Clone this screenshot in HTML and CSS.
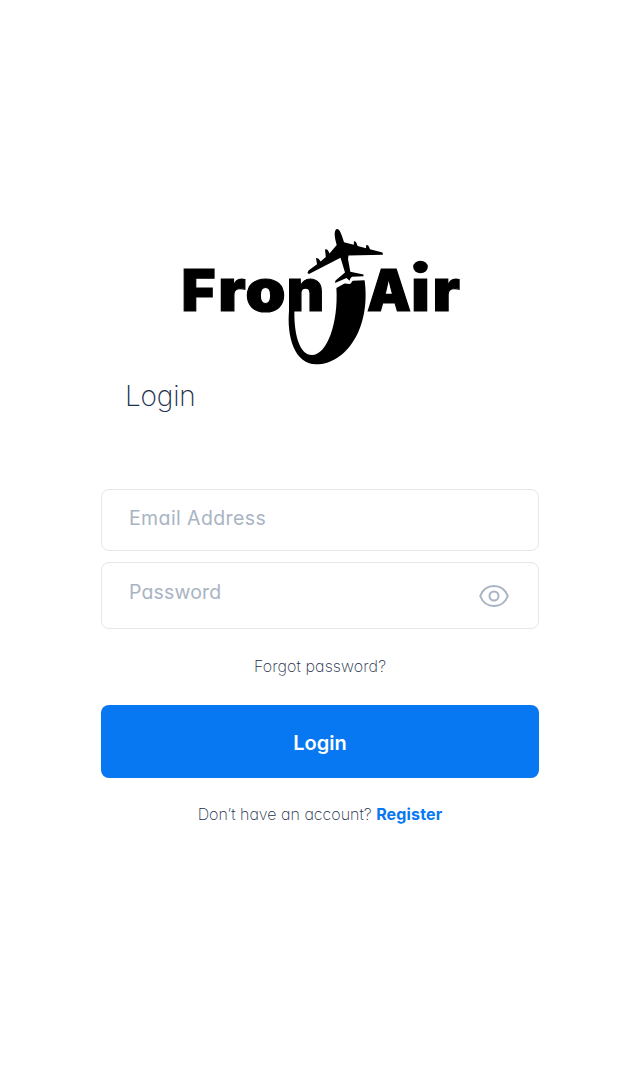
FILE: index.html
```html
<!DOCTYPE html>
<html lang="en">
<head>
<meta charset="utf-8">
<title>FronAir Login</title>
<link rel="stylesheet" href="styles.css">
</head>
<body>
<main class="login">
  <svg class="logo" viewBox="180 225 284 143" role="img" aria-label="FronAir">
    <clipPath id="stem"><rect x="405" y="277.500" width="30" height="40"/></clipPath>
    <g class="wordmark">
      <text y="310.7" x="181.600" textLength="34" lengthAdjust="spacingAndGlyphs">F</text>
      <text y="310.7" x="218.300" textLength="27.500" lengthAdjust="spacingAndGlyphs">r</text>
      <text y="310.7" x="245.500" textLength="40" lengthAdjust="spacingAndGlyphs">o</text>
      <text y="310.7" x="286.800" textLength="37.500" lengthAdjust="spacingAndGlyphs">n</text>
      <text y="310.7" x="367" textLength="44" lengthAdjust="spacingAndGlyphs">A</text>
      <text y="310.7" x="411.300" textLength="18.500" lengthAdjust="spacingAndGlyphs" clip-path="url(#stem)">i</text>
      <text y="310.7" x="432.500" textLength="27.500" lengthAdjust="spacingAndGlyphs">r</text>
    </g>
    <ellipse cx="420.500" cy="267" rx="7.300" ry="6.200"/>
    <path d="M289.3 308C286 337 295 364.3 316 364.3C347 364.3 371 327 364.6 280.2L353 280.8C351.5 281.5 351.5 284 349.5 284L344.5 283.5L336.4 288C338.5 323 327 355 312 355C298.500 355 293.500 331 294.500 308Z"/>
    <path d="M337 229C339.500 228.700 341.500 234 344 242.200L353.800 244.700L354 241.300Q356 240.500 357.600 246L366 248.200L366.300 245Q368.400 244.200 370 249.300L382.500 252.500L383 254.800L348.500 255.600L348 259L350.300 271.700L363.500 274.600V276.200L352 276.700L350.500 278.200L349.500 280.700L346.500 278L335 283L335.500 280.500L345 272.500L340.500 257.800L309 274L307.400 273L308.500 270.500L317 264.200L316 258.200Q318.500 257.200 320.600 261.600L325.800 257L325 249.500Q327.500 248 329.500 253.500L336.700 245C334.300 237 333.600 230 337 229Z"/>
  </svg>
  <h1 class="title">Login</h1>
  <form class="form">
    <div class="field field-email">Email Address</div>
    <div class="field field-password">
      <span>Password</span>
      <svg class="eye" viewBox="0 0 30 24" aria-hidden="true">
        <path d="M1.200 12C3.800 5.300 9 2 15 2S26.200 5.300 28.800 12C26.200 18.700 21 22 15 22S3.800 18.700 1.200 12Z"/>
        <circle cx="15" cy="12" r="4.500"/>
      </svg>
    </div>
    <a class="forgot">Forgot password?</a>
    <div class="submit" role="button">Login</div>
    <p class="signup"><span>Don’t have an account?</span> <a class="register">Register</a></p>
  </form>
</main>
</body>
</html>
```
FILE: styles.css
```css
* { box-sizing: border-box; }
body {
  margin: 0;
  background: #fff;
  color: #1c2f4a;
  font-family: Inter, "Noto Sans", sans-serif;
  font-feature-settings: "cv11";
}
.login {
  width: 438px;
  margin: 0 auto;
  padding-top: 225px;
  display: flex;
  flex-direction: column;
}
.logo { width: 284px; height: 143px; margin-left: 79px; overflow: visible; }
.wordmark {
  font-size: 58px;
  font-weight: 900;
  stroke: #000;
  stroke-width: 1.2px;
}
.title {
  margin: 10px 0 0 24px;
  font-size: 28px;
  line-height: 36px;
  font-weight: 200;
  letter-spacing: -0.2px;
}
.form { display: flex; flex-direction: column; margin-top: 75px; }
.field {
  display: flex;
  justify-content: space-between;
  border: 1px solid #e5e6e9;
  border-radius: 8px;
  padding: 0 29px 0 27px;
  color: #a9b4c3;
  font-size: 19.500px;
  line-height: 24px;
  letter-spacing: 0.15px;
}
.field-email { height: 62px; padding-top: 16px; letter-spacing: 0.400px; }
.field-password { height: 67px; margin-top: 11px; padding-top: 17px; }
.eye {
  width: 30px;
  height: 24px;
  margin-top: 4px;
  fill: none;
  stroke: #a9b4c3;
  stroke-width: 2;
}
.forgot {
  margin-top: 27px;
  text-align: center;
  font-size: 16px;
  line-height: 20px;
  font-weight: 200;
  letter-spacing: 0.1px;
}
.submit {
  height: 73px;
  margin-top: 29px;
  border-radius: 8px;
  background: #0878f2;
  color: #fff;
  text-align: center;
  font-size: 20px;
  line-height: 76px;
  font-weight: 600;
}
.signup {
  display: flex;
  justify-content: center;
  gap: 4.5px;
  margin: 26px 0 0;
  font-size: 16px;
  line-height: 20px;
  font-weight: 200;
}
.register { color: #0878f2; font-weight: 700; letter-spacing: 0.15px; }
```
